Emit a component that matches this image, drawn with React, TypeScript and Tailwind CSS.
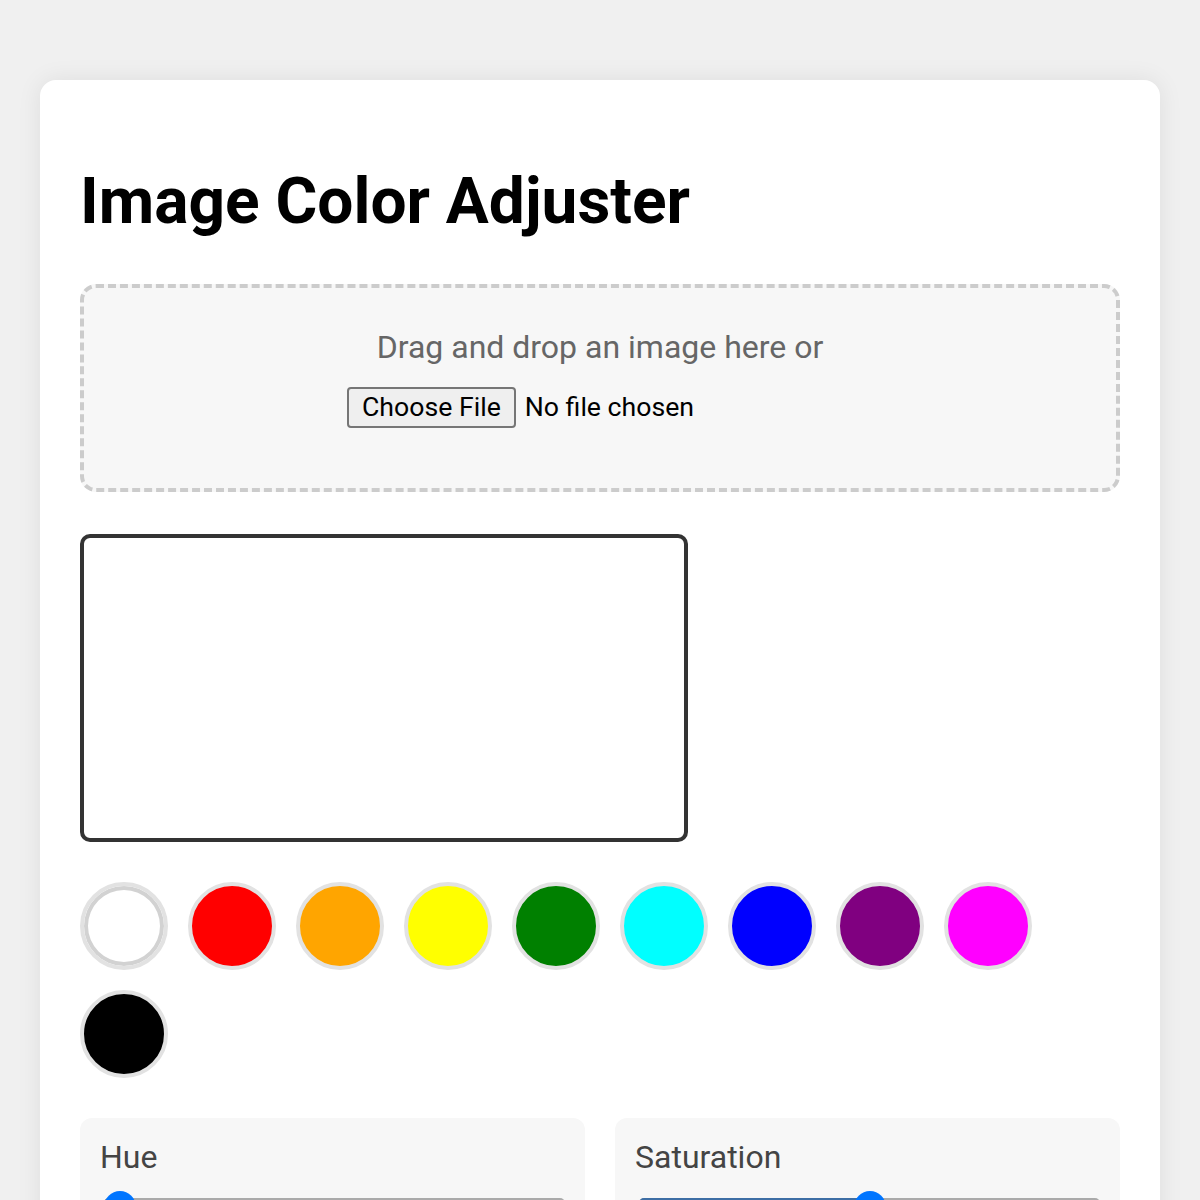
const swatches = [
  { name: "white", bg: "bg-[#ffffff]", selected: true },
  { name: "red", bg: "bg-[#ff0000]" },
  { name: "orange", bg: "bg-[#ffa500]" },
  { name: "yellow", bg: "bg-[#ffff00]" },
  { name: "green", bg: "bg-[#008000]" },
  { name: "cyan", bg: "bg-[#00ffff]" },
  { name: "blue", bg: "bg-[#0000ff]" },
  { name: "purple", bg: "bg-[#800080]" },
  { name: "magenta", bg: "bg-[#ff00ff]" },
  { name: "black", bg: "bg-[#000000]" },
];

const controls = [
  { label: "Hue", value: 0 },
  { label: "Saturation", value: 50 },
];

function Slider({ value }: { value: number }) {
  return (
    <div className="relative ml-[4px] mt-[15px] h-[32px]">
      <div className="absolute left-0 right-0 top-[7px] h-[10px] rounded-full bg-[#aaaaaa]" />
      <div
        className="absolute left-0 top-[7px] h-[10px] rounded-l-full bg-[#3d6ea5]"
        style={{ width: `calc(16px + (100% - 32px) * ${value / 100})` }}
      />
      <div
        className="absolute top-0 h-[32px] w-[32px] rounded-full bg-[#0075ff]"
        style={{ left: `calc((100% - 32px) * ${value / 100})` }}
      />
    </div>
  );
}

export default function App() {
  return (
    <div className="min-h-screen bg-[#f0f0f0] px-10 pt-20 pb-10 font-['Roboto',sans-serif]">
      <div className="rounded-[16px] bg-white p-10 shadow-[0_0_24px_rgba(0,0,0,0.08)]">
        <h1 className="mt-[43px] mb-[44px] text-[64px] leading-[77px] font-bold text-black">
          Image Color Adjuster
        </h1>

        <div className="rounded-[16px] border-4 border-dashed border-[#cccccc] bg-[#f7f7f7] px-5 pt-[41px] pb-[60px] text-center">
          <p className="text-[32px] leading-[37.5px] text-[#666666]">Drag and drop an image here or</p>
          <div className="mx-auto mt-[20px] flex w-[506px] items-center">
            <span className="flex h-[41px] items-center rounded-[4px] border-2 border-[#767676] bg-[#efefef] px-[13px] text-[26.67px] text-black">
              Choose File
            </span>
            <span className="ml-[9px] text-[26.67px] text-black">No file chosen</span>
          </div>
        </div>

        <div className="mt-[42px] h-[308px] w-[608px] rounded-[10px] border-4 border-[#333333] bg-white" />

        <div className="mt-[40px] flex flex-wrap gap-5">
          {swatches.map((s) => (
            <div
              key={s.name}
              className={`h-[88px] w-[88px] rounded-full border-4 border-[#e2e2e2] ${s.bg} ${
                s.selected ? "shadow-[inset_0_0_0_4px_#d2d2d2]" : ""
              }`}
            />
          ))}
        </div>

        <div className="mt-[40px] grid grid-cols-2 gap-[30px]">
          {controls.map((c) => (
            <div key={c.label} className="rounded-[12px] bg-[#f7f7f7] px-5 pt-[21px] pb-5">
              <label className="block text-[32px] leading-[37.5px] text-[#444444]">{c.label}</label>
              <Slider value={c.value} />
            </div>
          ))}
        </div>
      </div>
    </div>
  );
}
